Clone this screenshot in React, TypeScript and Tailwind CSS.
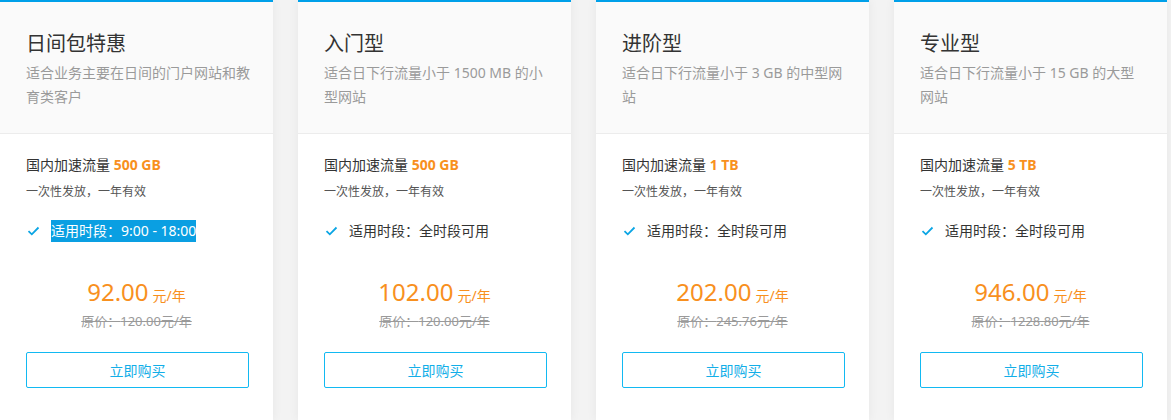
const plans = [
  {
    title: "日间包特惠",
    desc: ["适合业务主要在日间的门户网站和教", "育类客户"],
    amount: "500 GB",
    period: "9:00 - 18:00",
    highlight: true,
    price: "92.00",
    original: "120.00",
  },
  {
    title: "入门型",
    desc: ["适合日下行流量小于 1500 MB 的小", "型网站"],
    amount: "500 GB",
    period: "全时段可用",
    highlight: false,
    price: "102.00",
    original: "120.00",
  },
  {
    title: "进阶型",
    desc: ["适合日下行流量小于 3 GB 的中型网", "站"],
    amount: "1 TB",
    period: "全时段可用",
    highlight: false,
    price: "202.00",
    original: "245.76",
  },
  {
    title: "专业型",
    desc: ["适合日下行流量小于 15 GB 的大型", "网站"],
    amount: "5 TB",
    period: "全时段可用",
    highlight: false,
    price: "946.00",
    original: "1228.80",
  },
];

function Check() {
  return (
    <svg width="13" height="10" viewBox="0 0 13 10" className="shrink-0">
      <path d="M1.5 5.2 L4.8 8.3 L11.5 1.5" fill="none" stroke="#0aa5e4" strokeWidth="1.8" />
    </svg>
  );
}

export default function App() {
  return (
    <div
      className="w-[1171px] h-[420px] overflow-hidden bg-[#f3f3f3] flex gap-[25px]"
      style={{ fontFamily: '"Noto Sans", "Noto Sans CJK SC", sans-serif' }}
    >
      {plans.map((p) => (
        <div
          key={p.title}
          className="w-[273px] shrink-0 bg-white border-t-2 border-[#00a0e9] shadow-[0_0_10px_rgba(0,0,0,0.06)] flex flex-col"
        >
          {/* Header */}
          <div className="h-[132px] bg-[#fafafa] border-b border-[#ececec] px-[26px] pt-[27px]">
            <h2 className="text-[20px] leading-[30px] text-[#333]">{p.title}</h2>
            <p className="mt-[2px] text-[14px] leading-[24px] text-[#9a9a9a]">
              {p.desc.map((line) => (
                <span key={line} className="block whitespace-nowrap">
                  {line}
                </span>
              ))}
            </p>
          </div>

          {/* Body */}
          <div className="px-[26px] pt-[21px]">
            <div className="text-[14px] leading-[20px] text-[#333]">
              国内加速流量 <span className="font-bold text-[#f8901e]">{p.amount}</span>
            </div>
            <div className="mt-[7px] text-[12px] leading-[20px] text-[#555]">一次性发放，一年有效</div>
            <div className="mt-[18px] flex items-center gap-[11px] pl-[1px] text-[14px] leading-[22px] text-[#333]">
              <Check />
              {p.highlight ? (
                <span className="bg-[#0a9fe2] text-white">适用时段：{p.period}</span>
              ) : (
                <span>适用时段：{p.period}</span>
              )}
            </div>

            <div className="mt-[34px] flex items-baseline justify-center text-[#f8901e]">
              <span className="text-[24px] leading-[32px]">{p.price}</span>
              <span className="ml-[4px] text-[14px]">元/年</span>
            </div>
            <div className="mt-[1px] text-center text-[13px] leading-[24px] text-[#9a9a9a] line-through">
              原价：{p.original}元/年
            </div>

            <button className="mt-[19px] w-[223px] h-[36px] border border-[#12b9f2] rounded-[2px] bg-white text-[14px] text-[#12aee8]">
              立即购买
            </button>
          </div>
        </div>
      ))}
    </div>
  );
}
